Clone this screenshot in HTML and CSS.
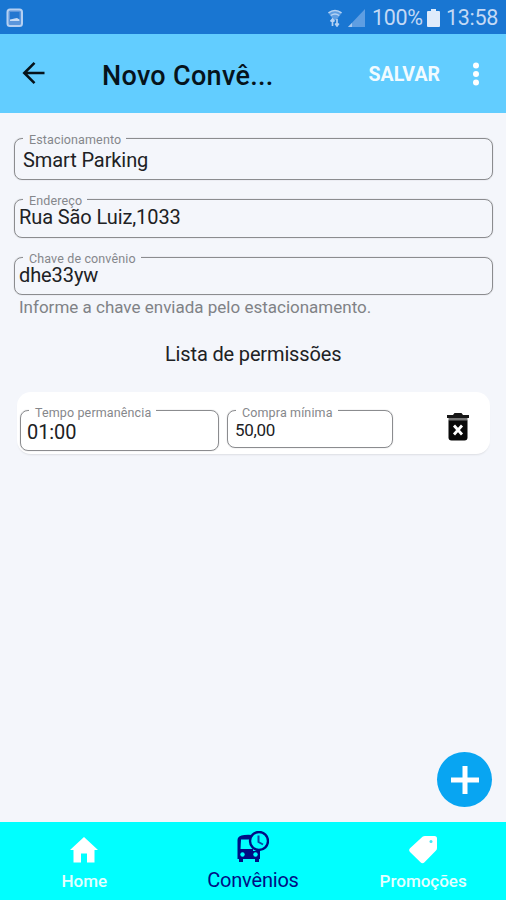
FILE: index.html
```html
<!DOCTYPE html>
<html lang="pt-BR">
<head>
<meta charset="utf-8">
<title>Novo Convênio</title>
<link rel="stylesheet" href="styles.css">
</head>
<body>
<div class="app">
  <div class="status">
    <svg class="status-image" width="18" height="20" viewBox="0 0 18 20"><rect x="1.5" y="1.5" width="14.5" height="16.5" rx="2.5" fill="#5b96dc" stroke="#b5d0f2" stroke-width="2"/><rect x="4" y="4" width="9.5" height="9" fill="#2377d0"/><path d="M4 13v-1.500l2.500-.5 2-.5L11 10l2.500 1.500V13z" fill="#c7dcf6"/></svg>
    <svg class="status-wifi" width="14" height="18" viewBox="0 0 14 18"><path d="M0 3.500Q7-1.500 14 3.500L8.500 11h-3z" fill="#5f9ee2"/><path d="M.5 3.800Q7-1 13.500 3.800M2.800 6.500q4.200-3 8.400 0" fill="none" stroke="#b5d2f3" stroke-width="1.500"/><path d="M4.500 17v-7M2.500 12.500l2-2.500 2 2.500M9 10v7M7.200 14.500L9 17l1.800-2.500" fill="none" stroke="#b5d2f3" stroke-width="1.700"/></svg>
    <svg class="status-signal" width="18" height="19" viewBox="0 0 18 19"><path d="M0 18L17 0v18z" fill="#5f9ee2"/><path d="M0 18l4-4v4z" fill="#a6c8ef"/></svg>
    <span class="status-battery">100%</span>
    <svg class="battery" width="13" height="18" viewBox="0 0 13 18"><path d="M4 0h5v2h3a1 1 0 0 1 1 1v14a1 1 0 0 1-1 1H1a1 1 0 0 1-1-1V3a1 1 0 0 1 1-1h3z" fill="#dfebfb"/></svg>
    <span class="status-time">13:58</span>
  </div>
  <header class="bar">
    <svg class="back" width="24" height="24" viewBox="0 0 24 24" fill="none" stroke="#06131b" stroke-width="2.600"><path d="M22.500 12H2.500M12.500 1.800L2.300 12l10.200 10.200"/></svg>
    <h1 class="title">Novo Convê...</h1>
    <span class="save">SALVAR</span>
    <svg class="more" width="8" height="24" viewBox="0 0 8 24" fill="#fff"><circle cx="4" cy="3.500" r="3"/><circle cx="4" cy="12" r="3"/><circle cx="4" cy="20.500" r="3"/></svg>
  </header>
  <main class="content">
    <div class="field field-place"><span class="label">Estacionamento</span><span class="value">Smart Parking</span></div>
    <div class="field field-address"><span class="label">Endereço</span><span class="value">Rua São Luiz,1033</span></div>
    <div class="field field-key"><span class="label">Chave de convênio</span><span class="value">dhe33yw</span></div>
    <p class="hint">Informe a chave enviada pelo estacionamento.</p>
    <h2 class="subtitle">Lista de permissões</h2>
    <div class="card">
      <div class="field field-time"><span class="label">Tempo permanência</span><span class="value">01:00</span></div>
      <div class="field field-min"><span class="label">Compra mínima</span><span class="value">50,00</span></div>
      <svg class="trash" width="22" height="28" viewBox="0 0 22 28"><path d="M0 2h6L7.500 0h7L16 2h6v3H0z" fill="#161616"/><path d="M1.500 5h19v3h-19z" fill="#777"/><path d="M1.500 7.500h19v17a3 3 0 0 1-3 3h-13a3 3 0 0 1-3-3z" fill="#090909"/><path d="M7 12.500l8 9M15 12.500l-8 9" stroke="#fff" stroke-width="2.800"/></svg>
    </div>
    <button class="fab" aria-label="Adicionar"><svg width="28" height="28" viewBox="0 0 28 28"><path d="M14 0v28M0 14h28" stroke="#fff" stroke-width="5"/></svg></button>
  </main>
  <nav class="tabs">
    <div class="tab"><svg width="28" height="26" viewBox="0 0 28 26"><path d="M14 0L0 13h3.500v12.500h7.500v-9h6v9h7.500V13H28z" fill="#fff"/></svg><span>Home</span></div>
    <div class="tab tab-active"><svg width="32" height="32" viewBox="0 0 32 32"><path d="M4.500 4.500Q8 3.500 16 4v16h7v8h-1v3h-4v-3H6v3H2v-3H.5V9q0-3.500 4-4.500z" fill="#000d84"/><path d="M4 8.500h10L16 18H3.500z" fill="#0ff"/><circle cx="5.500" cy="23.500" r="2.200" fill="#0ff"/><circle cx="18.500" cy="23.500" r="2.200" fill="#0ff"/><circle cx="22" cy="10" r="9" fill="#0ff" stroke="#000d84" stroke-width="2.400"/><path d="M21.500 4.500v6.500l4.500 2.500" fill="none" stroke="#064da5" stroke-width="2"/></svg><span>Convênios</span></div>
    <div class="tab tab-promo"><svg width="28" height="28" viewBox="0 0 28 28"><path d="M13.500.8Q14.500 0 16 0h9.500Q28 0 28 2.500V12q0 1.500-1 2.500L15.500 26.300q-2 1.700-4 0L1 16q-1.700-2 0-3.800z" fill="#fff"/><circle cx="22" cy="5.500" r="1.500" fill="#42e8f5"/></svg><span>Promoções</span></div>
  </nav>
</div>
</body>
</html>
```
FILE: styles.css
```css
* { box-sizing: border-box; }
body { margin: 0; font-family: Roboto, "Liberation Sans", sans-serif; color: #202124; background: #f4f6fb; }
svg { display: block; flex: none; }
.app { width: 506px; height: 900px; display: flex; flex-direction: column; overflow: hidden; }

.status { height: 34px; flex: none; display: flex; align-items: center; padding: 2px 8px 0 6px; background: #1976d2; color: #c3d9f5; font-size: 21.5px; line-height: 30px; white-space: nowrap; }
.status-wifi { margin-left: auto; }
.status-signal { margin-left: 6px; }
.status-battery { width: 51px; margin-left: 6px; letter-spacing: -0.3px; }
.battery { margin-left: 4px; }
.status-time { width: 52px; margin-left: 6px; letter-spacing: -0.3px; }

.bar { height: 79px; flex: none; display: flex; align-items: center; padding: 0 26px 0 22px; background: #62cdff; }
.back { margin-top: -2px; }
.title { margin: 4px 0 0 56px; font-size: 27px; font-weight: 500; line-height: 32px; letter-spacing: 0.3px; color: #06131b; white-space: nowrap; }
.save { margin-left: auto; margin-top: 2px; font-size: 19.5px; font-weight: 700; color: #f2fbff; }
.more { margin-left: 32px; margin-top: 1px; }

.content { flex: 1; position: relative; padding: 25px 13px 0 14px; }
.field { position: relative; border: 1.500px solid #8b8c8f; border-radius: 8px; white-space: nowrap; box-shadow: 0 0 1px #a6a7aa; }
.label { position: absolute; left: 8px; top: -6px; padding: 0 5px 0 6px; background: #f4f6fb; color: #85878b; font-size: 12.500px; line-height: 14px; letter-spacing: 0.13px; }
.value { position: relative; display: block; font-size: 20px; line-height: 24px; letter-spacing: -0.1px; }
.field-place { height: 42px; padding: 9px 8px; }
.field-address { height: 39px; margin-top: 19px; padding: 5px 4px; }
.field-key { height: 38px; margin-top: 19px; padding: 5px 4px; }
.hint { margin: 2px 0 0 5px; font-size: 17px; line-height: 20px; color: #808286; white-space: nowrap; }
.subtitle { margin: 25px 0 0 151px; font-size: 20px; font-weight: 400; line-height: 24px; letter-spacing: -0.15px; white-space: nowrap; }
.card { display: flex; align-items: flex-start; width: 473px; height: 62px; margin: 26px 0 0 3px; padding: 18px 21px 0 3px; border-radius: 14px; background: #fff; box-shadow: 0 2px 2px -1px #dcdee3; }
.card .label { top: -5px; background: #fff; }
.field-time { width: 199px; height: 41px; padding: 9px 6px; }
.field-min { width: 166px; height: 38px; margin-left: 8px; padding: 7px 7px; }
.field-min .value { font-size: 17px; letter-spacing: -0.3px; }
.trash { margin: 3px 0 0 auto; }
.fab { position: absolute; right: 14px; bottom: 15px; width: 55px; height: 55px; display: grid; place-items: center; padding: 0; border: 0; border-radius: 50%; background: #08a5f2; }

.tabs { height: 78px; flex: none; display: grid; grid-template-columns: repeat(3, 1fr); background: #0ff; color: #e4ffff; }
.tab { display: flex; flex-direction: column; align-items: center; padding-top: 15px; font-size: 17px; font-weight: 500; line-height: 22px; }
.tab span { margin-top: auto; margin-bottom: 8px; }
.tab-active { padding-top: 9px; font-size: 20px; font-weight: 400; letter-spacing: -0.2px; color: #000d84; }
.tab-active span { margin-bottom: 9px; }
.tab-promo { padding-left: 3px; padding-top: 14px; }
```
